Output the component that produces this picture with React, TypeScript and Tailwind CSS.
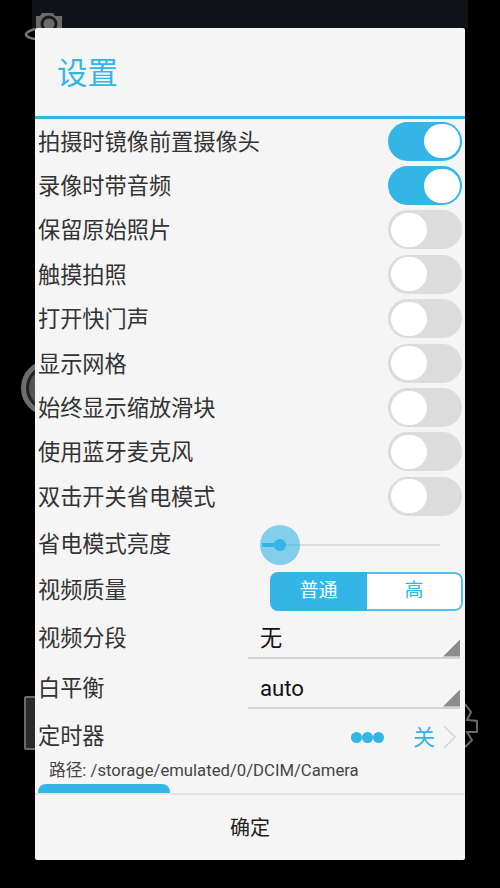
import React from 'react'

const switches: { label: string; on: boolean }[] = [
  { label: '拍摄时镜像前置摄像头', on: true },
  { label: '录像时带音频', on: true },
  { label: '保留原始照片', on: false },
  { label: '触摸拍照', on: false },
  { label: '打开快门声', on: false },
  { label: '显示网格', on: false },
  { label: '始终显示缩放滑块', on: false },
  { label: '使用蓝牙麦克风', on: false },
  { label: '双击开关省电模式', on: false },
]

function Toggle({ on }: { on: boolean }) {
  return (
    <div className={`flex h-[39px] w-[74px] items-center rounded-full p-[2.5px] ${on ? 'justify-end bg-[#33b5e5]' : 'justify-start bg-[#dcdcdc]'}`}>
      <div className="h-[34px] w-[36px] rounded-full bg-white" />
    </div>
  )
}

function SpinnerRow({ label, value, height }: { label: string; value: string; height: string }) {
  return (
    <div className={`flex items-end ${height}`}>
      <span className="mb-[3px] w-[213px] shrink-0 pl-[3px] text-[22.2px] text-[#333]">{label}</span>
      <div className="relative mr-[5px] flex h-[38px] flex-1 items-center border-b-2 border-[#d2d2d2] pl-[12px] text-[22.2px] text-[#111]">
        {value}
        <div className="absolute bottom-0 right-0 h-[17px] w-[17px] bg-[#8c8c8c] [clip-path:polygon(100%_0,100%_100%,0_100%)]" />
      </div>
    </div>
  )
}

export default function App() {
  return (
    <div className="relative h-[888px] w-[500px] overflow-hidden bg-black font-['Roboto','Noto_Sans_CJK_SC',sans-serif]">
      {/* what shows behind the dialog */}
      <div className="absolute left-[32px] top-0 h-[28px] w-[436px] bg-[#0f1317]" />
      <svg className="absolute left-[20px] top-[10px]" width="50" height="30" viewBox="0 0 50 30">
        <path d="M16 6 H20 L22 3 H33 L35 6 H42 V30 H16 Z" fill="#6b6b6b" />
        <circle cx="29" cy="14" r="7" fill="none" stroke="#1a1a1a" strokeWidth="3" />
        <path d="M15 19 Q5 22 6 25 Q8 28 15 29" fill="none" stroke="#777" strokeWidth="2.5" />
      </svg>
      <div className="absolute left-[21px] top-[360px] flex h-[56px] w-[56px] items-center justify-center rounded-full border-[5px] border-[#6e6e6e] bg-[#222]">
        <div className="h-[40px] w-[40px] rounded-full bg-[#555]" />
      </div>
      <div className="absolute left-[24px] top-[696px] h-[54px] w-[30px] rounded-[2px] border-2 border-[#6a6a6a] bg-[#2a2a2a]" />
      <svg className="absolute left-[462px] top-[700px]" width="20" height="50" viewBox="0 0 20 50">
        <path d="M3 4 L9 12 L5 20 L15 21 L15 32 L5 32 L10 40 L3 47" fill="none" stroke="#6a6a6a" strokeWidth="2" />
      </svg>

      <div className="absolute left-[35px] top-[28px] flex h-[832px] w-[430px] flex-col rounded-[2px] bg-[#f5f5f5]">
        <div className="flex h-[88px] shrink-0 items-center pl-[22px] pt-[4px] text-[30.5px] text-[#33b5e5]">设置</div>
        <div className="h-[3px] shrink-0 bg-[#33b5e5]" />

        <div className="flex min-h-0 flex-1 flex-col overflow-hidden">
          {switches.map(s => (
            <div key={s.label} className="flex h-[44.4px] shrink-0 items-center justify-between px-[3px]">
              <span className="pt-[2px] text-[22.2px] text-[#333]">{s.label}</span>
              <Toggle on={s.on} />
            </div>
          ))}

          <div className="flex h-[52px] shrink-0 items-center">
            <span className="w-[227px] shrink-0 pl-[3px] pt-[1px] text-[22.2px] text-[#333]">省电模式亮度</span>
            <div className="relative mr-[25px] h-[2px] flex-1 bg-[#dcdcdc]">
              <div className="absolute left-0 top-[-1px] h-[4px] w-[18px] bg-[#33b5e5]" />
              <div className="absolute left-[18px] top-[-19px] h-[40px] w-[40px] -translate-x-1/2 rounded-full bg-[#33b5e5]/60" />
              <div className="absolute left-[18px] top-[-5px] h-[12px] w-[12px] -translate-x-1/2 rounded-full bg-[#33b5e5]" />
            </div>
          </div>

          <div className="flex h-[41px] shrink-0 items-center">
            <span className="w-[235px] shrink-0 pl-[3px] text-[22.2px] text-[#333]">视频质量</span>
            <div className="mr-[2px] flex h-[39px] flex-1 overflow-hidden rounded-[8px] text-[19px]">
              <div className="flex w-[97px] items-center justify-center bg-[#33b5e5] text-white">普通</div>
              <div className="flex flex-1 items-center justify-center rounded-r-[8px] border-2 border-l-0 border-[#4fc0ea] bg-white text-[#33b5e5]">高</div>
            </div>
          </div>

          <SpinnerRow label="视频分段" value="无" height="h-[47px] shrink-0" />
          <SpinnerRow label="白平衡" value="auto" height="h-[50px] shrink-0" />

          <div className="flex h-[51px] shrink-0 items-center pl-[3px] pt-[6px]">
            <span className="text-[22.2px] text-[#333]">定时器</span>
            <div className="ml-auto flex items-center">
              <span className="h-[11px] w-[11px] rounded-full bg-[#33b5e5]" />
              <span className="h-[11px] w-[11px] rounded-full bg-[#33b5e5]" />
              <span className="h-[11px] w-[11px] rounded-full bg-[#33b5e5]" />
            </div>
            <span className="ml-[29px] text-[22px] text-[#33b5e5]">关</span>
            <svg className="ml-[8px] mr-[8px]" width="14" height="24" viewBox="0 0 14 24">
              <path d="M1 1 L12 12 L1 23" fill="none" stroke="#d4d4d4" strokeWidth="1.5" />
            </svg>
          </div>

          <div className="shrink-0 pl-[14px] text-[16.7px] leading-[22px] text-[#444]">路径: /storage/emulated/0/DCIM/Camera</div>
          <div className="ml-[3px] mt-[2px] h-[10px] w-[132px] shrink-0 rounded-t-[8px] bg-[#33b5e5]" />
        </div>

        <div className="flex h-[67px] shrink-0 items-center justify-center border-t-2 border-[#e4e4e4] text-[20px] text-[#222]">确定</div>
      </div>
    </div>
  )
}
